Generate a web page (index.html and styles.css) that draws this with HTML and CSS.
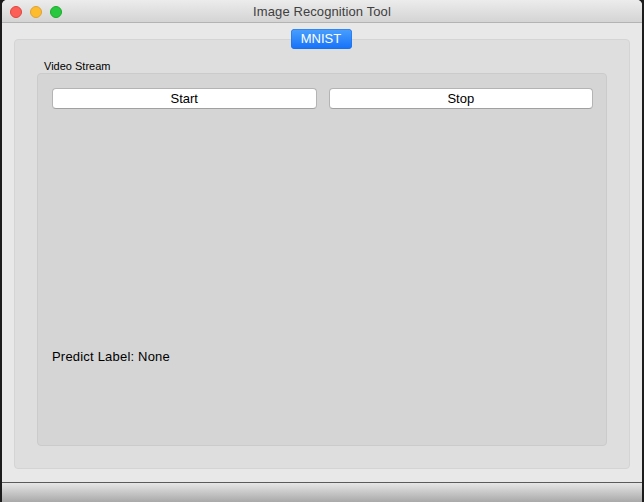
FILE: index.html
```html
<!DOCTYPE html>
<html>
<head>
<meta charset="utf-8">
<title>Image Recognition Tool</title>
<link rel="stylesheet" href="styles.css">
</head>
<body>
<div class="window">
  <div class="titlebar">
    <div class="lights">
      <span class="light red"></span>
      <span class="light yellow"></span>
      <span class="light green"></span>
    </div>
    <div class="title">Image Recognition Tool</div>
  </div>
  <div class="content">
    <div class="tabwidget">
      <div class="tabbar"><button class="tab">MNIST</button></div>
      <div class="pane">
        <div class="group">
          <div class="group-title">Video Stream</div>
          <div class="group-frame">
            <div class="btn-row">
              <button class="btn">Start</button>
              <button class="btn">Stop</button>
            </div>
            <div class="video"></div>
            <div class="label">Predict Label: None</div>
          </div>
        </div>
      </div>
    </div>
  </div>
  <div class="statusbar"></div>
</div>
</body>
</html>
```

FILE: styles.css
```css
html, body {
  margin: 0;
  padding: 0;
  background: #1c1c1c;
}
body {
  width: 644px;
  height: 502px;
  overflow: hidden;
  font-family: "Liberation Sans", Arial, sans-serif;
}
.window {
  margin: 0 2px;
  width: 640px;
  height: 502px;
  display: flex;
  flex-direction: column;
  background: #e8e8e8;
  border-radius: 5px 5px 0 0;
  overflow: hidden;
}
.titlebar {
  height: 22px;
  border-bottom: 1px solid #b3b3b3;
  background: linear-gradient(#ececec, #d4d4d4);
  display: flex;
  align-items: center;
  position: relative;
}
.lights {
  display: flex;
  gap: 8px;
  padding-left: 8px;
  padding-top: 1px;
}
.light {
  width: 12px;
  height: 12px;
  box-sizing: border-box;
  border-radius: 50%;
  display: block;
}
.red { background: #fc5f57; border: 0.5px solid #e0443e; }
.yellow { background: #fdbb2e; border: 0.5px solid #dea236; }
.green { background: #28c840; border: 0.5px solid #1aab29; }
.title {
  position: absolute;
  left: 0;
  right: 0;
  top: 4px;
  text-align: center;
  font-size: 13px;
  letter-spacing: 0.1px;
  color: #404040;
  line-height: 16px;
}
.content {
  flex: 1;
  padding: 6px 12px 13px 12px;
  display: flex;
  flex-direction: column;
}
.tabwidget {
  flex: 1;
  display: flex;
  flex-direction: column;
}
.tabbar {
  display: flex;
  justify-content: center;
  margin-bottom: -10px;
  position: relative;
  z-index: 1;
  padding-right: 2px;
}
.tab {
  width: 61px;
  height: 20px;
  border: none;
  border-radius: 4px;
  background: linear-gradient(#4aa0fd, #1671f8);
  box-shadow: inset 0 0 0 0.5px #1a6ee6;
  color: #fff;
  font-family: "Liberation Sans", Arial, sans-serif;
  font-size: 13px;
  padding: 0;
  line-height: 20px;
}
.pane {
  flex: 1;
  background: #dedede;
  border: 1px solid #d4d4d4;
  border-radius: 4px;
  padding: 19px 22px 22px 22px;
  display: flex;
  flex-direction: column;
}
.group {
  flex: 1;
  display: flex;
  flex-direction: column;
}
.group-title {
  font-size: 11px;
  line-height: 14px;
  color: #000;
  padding-left: 7px;
}
.group-frame {
  flex: 1;
  background: #d5d5d5;
  border: 1px solid #cbcbcb;
  border-radius: 4px;
  padding: 14px 13px 0 14px;
  display: flex;
  flex-direction: column;
}
.btn-row {
  display: flex;
  gap: 12px;
}
.btn {
  flex: 1;
  height: 21px;
  background: #fff;
  border: 1px solid #b4b4b4;
  border-bottom-color: #a0a0a0;
  border-radius: 4px;
  font-family: "Liberation Sans", Arial, sans-serif;
  font-size: 13px;
  color: #000;
  padding: 0;
  line-height: 19px;
}
.video {
  height: 240px;
}
.label {
  font-size: 13px;
  letter-spacing: 0.2px;
  line-height: 16px;
  color: #000;
}
.statusbar {
  height: 19px;
  border-top: 1px solid #5a5a5a;
  background: linear-gradient(#e6e6e6, #a9a9a9);
}
```
